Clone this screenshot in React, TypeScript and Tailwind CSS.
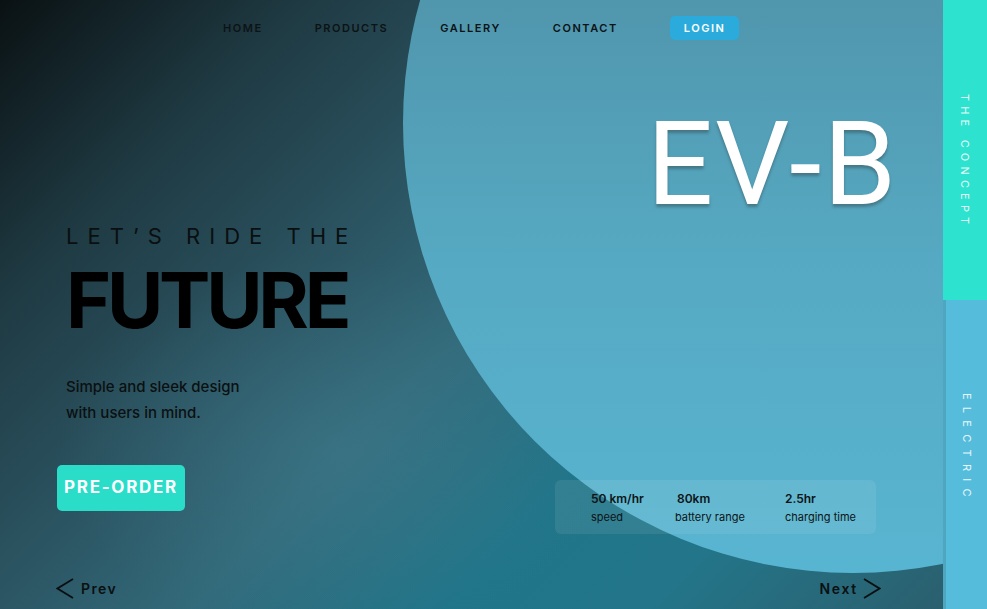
const navItems = ["HOME", "PRODUCTS", "GALLERY", "CONTACT"];

const stats = [
  { value: "50 km/hr", label: "speed", w: "w-[84px]" },
  { value: "80km", label: "battery range", w: "w-[110px]" },
  { value: "2.5hr", label: "charging time", w: "w-[90px]" },
];

const Chevron = ({ dir }: { dir: "left" | "right" }) => (
  <svg width="18" height="21" viewBox="0 0 18 21" fill="none" stroke="#0a1012" strokeWidth="1.8">
    {dir === "left" ? <polyline points="17,1 1.5,10.5 17,20" /> : <polyline points="1,1 16.5,10.5 1,20" />}
  </svg>
);

const Nav = () => (
  <nav className="flex h-[56px] items-center gap-[52px] pl-[223px]">
    {navItems.map((item) => (
      <a key={item} className="text-[11px] font-semibold tracking-[0.14em] text-[#0c1315]">
        {item}
      </a>
    ))}
    <button className="h-[24px] rounded-[5px] bg-[#2aabdb] px-[14px] text-[11px] font-semibold tracking-[0.14em] text-white">
      LOGIN
    </button>
  </nav>
);

const StatsBox = () => (
  <div className="flex h-[54px] w-[321px] items-center rounded-[6px] bg-white/[0.08] pl-[36px]">
    {stats.map((s, i) => (
      <div key={s.label} className={`${s.w} flex flex-col gap-[4px]`}>
        <span
          className={`text-[12px] font-semibold leading-[15px] text-[#0c1416] ${i === 1 ? "pl-[2px]" : ""}`}
        >
          {s.value}
        </span>
        <span className="text-[11px] leading-[14px] text-[#0c1416]">{s.label}</span>
      </div>
    ))}
  </div>
);

const SideBar = () => (
  <aside className="relative z-10 flex w-[44px] flex-col">
    <div className="flex h-[300px] items-center justify-center bg-[#2de2cf] pt-[24px]">
      <span className="text-[11px] tracking-[0.47em] text-[#e6fbf8] [writing-mode:vertical-rl]">
        THE CONCEPT
      </span>
    </div>
    <div className="flex flex-1 items-center justify-center border-l-[3px] border-[#4ea6c1] bg-[#56bcdb] pb-[12px]">
      <span className="text-[11px] tracking-[0.66em] text-[#e6f7fb] [writing-mode:vertical-rl]">
        ELECTRIC
      </span>
    </div>
  </aside>
);

export default function App() {
  return (
    <div
      className="relative flex h-[609px] w-full overflow-hidden bg-[radial-gradient(ellipse_at_34%_74%,rgba(70,130,148,0.35)_0%,rgba(70,130,148,0)_30%),linear-gradient(135deg,#0a1113_0%,#1f3a43_19%,#2c5664_38%,#326a7a_50%,#207589_66%,#23768a_78%,#2c5c6a_100%)]"
      style={{ fontFamily: "Inter, 'Noto Sans', sans-serif" }}
    >
      {/* big decorative circle */}
      <div className="absolute left-[403px] top-[-327px] h-[900px] w-[900px] rounded-full bg-[linear-gradient(180deg,#4b889e_0%,#5096ad_36%,#56a9c2_65%,#58b5d1_100%)]" />

      <main className="relative z-10 flex flex-1 flex-col">
        <Nav />

        <div className="flex h-[512px]">
          <div className="flex w-[480px] flex-col pl-[66px]">
            <p className="mt-[169px] text-[22px] leading-none tracking-[0.41em] text-[#0a0f10]">
              LET’S RIDE THE
            </p>
            <h1 className="mt-[15px] text-[77px] font-bold leading-none tracking-[-0.055em] text-black">
              FUTURE
            </h1>
            <p className="mt-[35px] text-[15px] font-medium leading-[26px] text-[#0b1011]">
              Simple and sleek design
              <br />
              with users in mind.
            </p>
            <button className="-ml-[9px] mt-[39px] h-[46px] w-[128px] rounded-[5px] bg-[#2addc9] text-[17px] font-bold tracking-[0.1em] text-white">
              PRE-ORDER
            </button>
          </div>

          <div className="flex flex-1 flex-col items-end">
            <h2
              className="mr-[45px] mt-[50px] text-[117px] font-normal leading-none tracking-[0.015em] text-white [text-shadow:0_3px_3px_rgba(40,40,40,0.35)]"
              style={{ fontFamily: "Roboto, Inter, sans-serif" }}
            >
              EV-B
            </h2>
            <div className="mb-[34px] mr-[67px] mt-auto">
              <StatsBox />
            </div>
          </div>
        </div>

        <div className="flex h-[41px] items-center justify-between pl-[56px] pr-[62px]">
          <button className="flex items-center gap-[7px] text-[14px] font-semibold tracking-[0.1em] text-[#0a1012]">
            <Chevron dir="left" />
            Prev
          </button>
          <button className="flex items-center gap-[5px] text-[14px] font-semibold tracking-[0.12em] text-[#0a1012]">
            Next
            <Chevron dir="right" />
          </button>
        </div>
      </main>

      <SideBar />
    </div>
  );
}
